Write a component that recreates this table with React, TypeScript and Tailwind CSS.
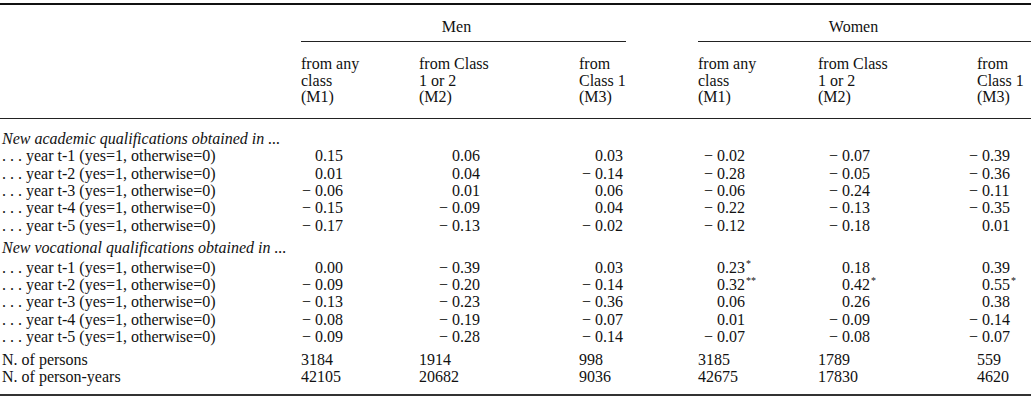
const grid = "grid grid-cols-[301px_118px_160px_47px_72px_120px_159px_54px]";

// offset of the decimal point from the column's left edge
const decimal = [22, 41, 24, 27, 32, 13];

type Cell = string;

const academic: Cell[][] = [
  ["0.15", "0.06", "0.03", "-0.02", "-0.07", "-0.39"],
  ["0.01", "0.04", "-0.14", "-0.28", "-0.05", "-0.36"],
  ["-0.06", "0.01", "0.06", "-0.06", "-0.24", "-0.11"],
  ["-0.15", "-0.09", "0.04", "-0.22", "-0.13", "-0.35"],
  ["-0.17", "-0.13", "-0.02", "-0.12", "-0.18", "0.01"],
];

const vocational: Cell[][] = [
  ["0.00", "-0.39", "0.03", "0.23*", "0.18", "0.39"],
  ["-0.09", "-0.20", "-0.14", "0.32**", "0.42*", "0.55*"],
  ["-0.13", "-0.23", "-0.36", "0.06", "0.26", "0.38"],
  ["-0.08", "-0.19", "-0.07", "0.01", "-0.09", "-0.14"],
  ["-0.09", "-0.28", "-0.14", "-0.07", "-0.08", "-0.07"],
];

function Num({ value, col }: { value: string; col: number }) {
  const stars = value.match(/\*+$/)?.[0] ?? "";
  const raw = value.replace(/\*+$/, "");
  const neg = raw.startsWith("-");
  const [int, frac] = raw.replace("-", "").split(".");
  return (
    <div className="flex items-baseline whitespace-nowrap">
      <span className="flex shrink-0 justify-end whitespace-nowrap" style={{ width: decimal[col] }}>
        {neg ? "\u2212\u00a0" : ""}
        {int}
      </span>
      <span>.{frac}</span>
      {stars && <span className="text-[10px] leading-none relative top-[-6px] ml-[1px]">{stars}</span>}
    </div>
  );
}

function DataRow({ label, cells, className = "" }: { label: string; cells: Cell[]; className?: string }) {
  return (
    <div className={`${grid} h-[17.4px] items-center ${className}`}>
      <div className="pl-[2px] whitespace-nowrap">{label}</div>
      <Num value={cells[0]} col={0} />
      <Num value={cells[1]} col={1} />
      <Num value={cells[2]} col={2} />
      <div />
      <Num value={cells[3]} col={3} />
      <Num value={cells[4]} col={4} />
      <Num value={cells[5]} col={5} />
    </div>
  );
}

function CountRow({ label, cells, className = "" }: { label: string; cells: string[]; className?: string }) {
  return (
    <div className={`${grid} h-[17.8px] items-center ${className}`}>
      <div className="pl-[2px] whitespace-nowrap">{label}</div>
      <div>{cells[0]}</div>
      <div>{cells[1]}</div>
      <div>{cells[2]}</div>
      <div />
      <div>{cells[3]}</div>
      <div>{cells[4]}</div>
      <div>{cells[5]}</div>
    </div>
  );
}

function Heading({ text, className = "" }: { text: string; className?: string }) {
  return <div className={`pl-[2px] h-[17.4px] flex items-center italic whitespace-nowrap ${className}`}>{text}</div>;
}

const rowLabel = (n: number) => `. . . year t-${n} (yes=1, otherwise=0)`;

export default function App() {
  return (
    <div className="w-[1031px] h-[404px] bg-white text-[#111] text-[16px] leading-[17.4px] font-['Liberation_Serif',serif] pt-[3px]">
      <div className="border-t-2 border-[#111]">
        {/* group headers */}
        <div className={`${grid} h-[37px]`}>
          <div />
          <div className="col-span-3 flex flex-col">
            <div className="flex-1 flex items-center justify-center pr-[14px] pt-[7px]">Men</div>
            <div className="border-b border-[#222]" />
          </div>
          <div />
          <div className="col-span-3 flex flex-col">
            <div className="flex-1 flex items-center justify-center pr-[22px] pt-[7px]">Women</div>
            <div className="border-b border-[#222]" />
          </div>
        </div>

        {/* column headers */}
        <div className={`${grid} leading-[16.6px] pt-[14px] pb-[12px] border-b border-[#222]`}>
          <div />
          <div>from any<br />class<br />(M1)</div>
          <div>from Class<br />1 or 2<br />(M2)</div>
          <div className="whitespace-nowrap">from<br />Class 1<br />(M3)</div>
          <div />
          <div>from any<br />class<br />(M1)</div>
          <div>from Class<br />1 or 2<br />(M2)</div>
          <div className="whitespace-nowrap">from<br />Class 1<br />(M3)</div>
        </div>

        <Heading text="New academic qualifications obtained in ..." className="mt-[11px]" />
        {academic.map((r, i) => (
          <DataRow key={`a${i}`} label={rowLabel(i + 1)} cells={r} />
        ))}

        <Heading text="New vocational qualifications obtained in ..." className="mt-[5px]" />
        {vocational.map((r, i) => (
          <DataRow key={`v${i}`} label={rowLabel(i + 1)} cells={r} className={i === 0 ? "mt-[2px]" : ""} />
        ))}

        <CountRow label="N. of persons" cells={["3184", "1914", "998", "3185", "1789", "559"]} className="mt-[5px]" />
        <CountRow label="N. of person-years" cells={["42105", "20682", "9036", "42675", "17830", "4620"]} />
        <div className="mt-[8px] border-b-2 border-[#333]" />
      </div>
    </div>
  );
}
